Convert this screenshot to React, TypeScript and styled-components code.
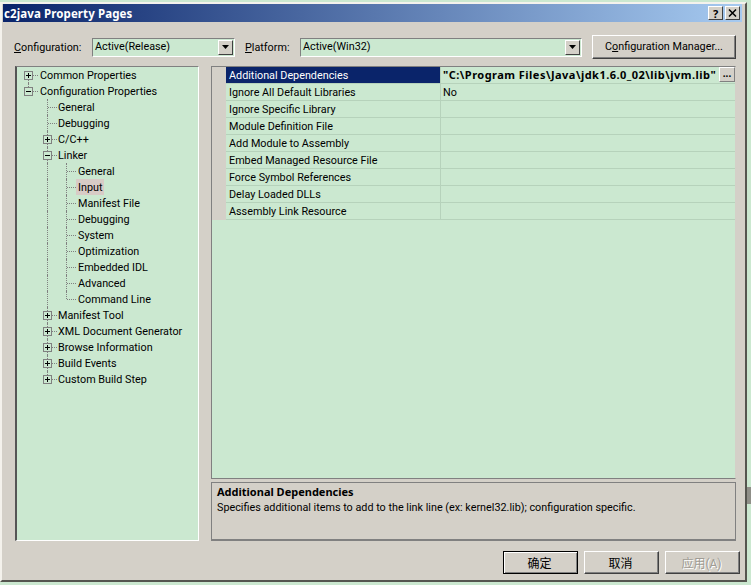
import React from 'react';
import styled, { createGlobalStyle } from 'styled-components';

const green = '#cbe8d0';
const face = '#d4d0c8';
const uiFont = 'Roboto, "Noto Sans CJK SC", sans-serif';
const boldFont = '"Noto Sans", "Noto Sans CJK SC", sans-serif';

const GlobalStyle = createGlobalStyle`
    html, body {
        margin: 0;
        padding: 0;
        background: ${green};
        overflow: hidden;
    }
    body {
        font-family: ${uiFont};
        font-size: 10.8px;
        color: #000;
    }
`;

const Page = styled.div`
    width: 751px;
    height: 585px;
    padding-top: 2px;
    box-sizing: border-box;
    display: flex;
    align-items: flex-start;
`;

const Side = styled.div`
    flex: 1;
    height: 100%;
    box-sizing: border-box;
    display: flex;
    flex-direction: column;
    padding-top: 485px;
`;

const SideThumb = styled.div`
    height: 17px;
    background: #8f8f88;
`;

const Window = styled.div`
    width: 747px;
    height: 580px;
    box-sizing: border-box;
    background: ${face};
    border-top: 2px solid #f4f2ec;
    border-left: 2px solid #f4f2ec;
    border-right: 2px solid #55554f;
    border-bottom: 2px solid #55554f;
    display: flex;
    flex-direction: column;
`;

const TitleBar = styled.div`
    height: 18px;
    margin: 0 3px 0 1px;
    padding: 0 2px 0 1px;
    display: flex;
    align-items: center;
    gap: 2px;
    background: linear-gradient(90deg, #0a246a 0%, #a6caf0 100%);
`;

const TitleText = styled.span`
    flex: 1;
    color: #fff;
    font: 700 11.5px ${boldFont};
    letter-spacing: 0.1px;
`;

const CaptionButton = styled.button`
    width: 15px;
    height: 14px;
    padding: 0;
    background: ${face};
    border: 1px solid;
    border-color: #fff #404040 #404040 #fff;
    display: flex;
    align-items: center;
    justify-content: center;
    font: 700 11px ${boldFont};
    color: #000;
`;

const Toolbar = styled.div`
    height: 24px;
    margin-top: 13px;
    padding: 0 9px 0 12px;
    display: flex;
    align-items: center;
`;

const FieldLabel = styled.label<{ $width: number; $inset?: number }>`
    width: ${({ $width }) => $width}px;
    padding-left: ${({ $inset }) => $inset ?? 0}px;
    box-sizing: border-box;
    flex-shrink: 0;
`;

const Combo = styled.div<{ $width: number }>`
    width: ${({ $width }) => $width}px;
    height: 19px;
    box-sizing: border-box;
    background: ${green};
    border: 1px solid;
    border-color: #808080 #fff #fff #808080;
    display: flex;
    align-items: center;
    justify-content: space-between;
    padding: 0 1px 0 2px;
    flex-shrink: 0;
`;

const ComboValue = styled.span`
    margin-top: -2px;
`;

const ComboArrow = styled.div`
    width: 15px;
    height: 15px;
    box-sizing: border-box;
    background: ${face};
    border: 1px solid;
    border-color: #fff #404040 #404040 #fff;
    display: flex;
    align-items: center;
    justify-content: center;
`;

const ManagerButton = styled.button`
    width: 144px;
    height: 24px;
    margin-left: 10px;
    padding: 0 0 2px;
    background: ${face};
    border: 1px solid;
    border-color: #fff #404040 #404040 #fff;
    box-shadow: inset -1px -1px 0 #808080;
    font: 10.8px ${uiFont};
    color: #000;
`;

const Panels = styled.div`
    height: 475px;
    margin-top: 7px;
    padding: 0 9px 0 13px;
    display: grid;
    grid-template-columns: 184px 525px;
    column-gap: 12px;
`;

const Tree = styled.div`
    box-sizing: border-box;
    background: ${green};
    border: 1px solid;
    border-width: 1px 1px 1px 2px;
    border-color: #808080 #fff #fff #555;
    padding: 0 0 0 2px;
`;

const TreeRow = styled.div`
    height: 16px;
    display: flex;
    align-items: stretch;
`;

const Guide = styled.div<{ $up?: boolean; $down?: boolean; $branch?: boolean }>`
    width: 19px;
    flex-shrink: 0;
    position: relative;
    display: flex;
    align-items: center;
    justify-content: center;
    &::before {
        content: '';
        position: absolute;
        left: 9px;
        top: ${({ $up }) => ($up ? 0 : 8)}px;
        bottom: ${({ $down }) => ($down ? 0 : 8)}px;
        border-left: 1px dotted #808080;
    }
    &::after {
        content: '';
        display: ${({ $branch }) => ($branch ? 'block' : 'none')};
        position: absolute;
        left: 10px;
        right: 0;
        top: 8px;
        border-top: 1px dotted #808080;
    }
`;

const Expander = styled.svg`
    position: relative;
    z-index: 1;
    width: 9px;
    height: 9px;
    margin-top: 1px;
`;

const TreeLabel = styled.span<{ $active?: boolean; $pull?: boolean }>`
    padding: 1px 2px 0;
    margin-left: ${({ $pull }) => ($pull ? -1 : 0)}px;
    line-height: 16px;
    height: 15px;
    overflow: hidden;
    white-space: nowrap;
    background: ${({ $active }) => ($active ? '#d8cbc6' : 'transparent')};
`;

const RightColumn = styled.div`
    display: flex;
    flex-direction: column;
    gap: 3px;
`;

const GridPanel = styled.div`
    flex: 1;
    box-sizing: border-box;
    background: ${green};
    border: 1px solid;
    border-color: #808080 ${face} #808080 #808080;
`;

const GridRow = styled.div`
    height: 17px;
    display: grid;
    grid-template-columns: 14px 214px 1fr;
`;

const GridMargin = styled.div`
    background: ${face};
`;

const NameCell = styled.div<{ $selected?: boolean }>`
    padding: 1px 0 0 3px;
    line-height: 15px;
    white-space: nowrap;
    box-sizing: border-box;
    border-bottom: 1px solid #b6d2bb;
    color: ${({ $selected }) => ($selected ? '#fff' : '#000')};
    background: ${({ $selected }) => ($selected ? '#0a246a' : 'transparent')};
`;

const ValueCell = styled.div`
    padding-left: 2px;
    margin-left: 1px;
    line-height: 18px;
    height: 17px;
    white-space: nowrap;
    box-sizing: border-box;
    border-bottom: 1px solid #b6d2bb;
    box-shadow: -1px 0 0 #b6d2bb;
    display: flex;
    justify-content: space-between;
`;

const PathValue = styled.span`
    font: 700 11px/16px ${boldFont};
    letter-spacing: 0.47px;
`;

const EllipsisButton = styled.button`
    width: 16px;
    height: 15px;
    padding: 0 0 5px;
    background: ${face};
    border: 1px solid;
    border-color: #fff #808080 #808080 #fff;
    font: 700 10px/10px ${boldFont};
    color: #000;
`;

const HelpPanel = styled.div`
    height: 59px;
    box-sizing: border-box;
    border: 1px solid;
    border-width: 1px 1px 2px 1px;
    border-color: #808080;
    padding: 1px 5px;
`;

const HelpTitle = styled.div`
    font: 700 11px/16px ${boldFont};
`;

const HelpText = styled.div`
    line-height: 16px;
`;

const Footer = styled.div`
    height: 23px;
    margin-top: 10px;
    padding-right: 5px;
    display: flex;
    justify-content: flex-end;
    gap: 6px;
`;

const DialogButton = styled.button<{ $isDefault?: boolean }>`
    width: 75px;
    height: 23px;
    padding: 0 2px 0 0;
    background: ${face};
    border: 1px solid;
    border-color: ${({ $isDefault }) => ($isDefault ? '#000' : '#fff #404040 #404040 #fff')};
    box-shadow: ${({ $isDefault }) => ($isDefault ? 'inset 1px 1px 0 #fff, inset -1px -1px 0 #808080' : 'inset -1px -1px 0 #808080')};
    font: 12px ${uiFont};
    color: #000;
    &:disabled {
        color: #a09c94;
        text-shadow: 1px 1px 0 #fff;
    }
`;

type GuideKind = 'none' | 'through' | 'branch' | 'last' | 'expandPlus' | 'expandMinus' | 'rootPlus' | 'rootMinus';

interface TreeItem {
    label: string;
    guides: GuideKind[];
    active?: boolean;
}

const level3 = (label: string, last = false, active = false): TreeItem => ({
    label,
    active,
    guides: ['none', 'through', last ? 'last' : 'branch'],
});

const treeItems: TreeItem[] = [
    { label: 'Common Properties', guides: ['rootPlus'] },
    { label: 'Configuration Properties', guides: ['rootMinus'] },
    { label: 'General', guides: ['none', 'branch'] },
    { label: 'Debugging', guides: ['none', 'branch'] },
    { label: 'C/C++', guides: ['none', 'expandPlus'] },
    { label: 'Linker', guides: ['none', 'expandMinus'] },
    level3('General'),
    level3('Input', false, true),
    level3('Manifest File'),
    level3('Debugging'),
    level3('System'),
    level3('Optimization'),
    level3('Embedded IDL'),
    level3('Advanced'),
    level3('Command Line', true),
    { label: 'Manifest Tool', guides: ['none', 'expandPlus'] },
    { label: 'XML Document Generator', guides: ['none', 'expandPlus'] },
    { label: 'Browse Information', guides: ['none', 'expandPlus'] },
    { label: 'Build Events', guides: ['none', 'expandPlus'] },
    { label: 'Custom Build Step', guides: ['none', 'expandPlus'] },
];

const gridNames = [
    'Additional Dependencies',
    'Ignore All Default Libraries',
    'Ignore Specific Library',
    'Module Definition File',
    'Add Module to Assembly',
    'Embed Managed Resource File',
    'Force Symbol References',
    'Delay Loaded DLLs',
    'Assembly Link Resource',
];

const ExpanderIcon = ({ open }: { open: boolean }) => (
    <Expander viewBox="0 0 9 9">
        <rect x="0.5" y="0.5" width="8" height="8" fill={green} stroke="#808080" />
        <path d={open ? 'M2 4.5h5' : 'M2 4.5h5M4.5 2v5'} stroke="#000" fill="none" />
    </Expander>
);

const ArrowIcon = () => (
    <svg width="7" height="4" viewBox="0 0 7 4">
        <path d="M0 0h7L3.5 4z" fill="#000" />
    </svg>
);

const CloseIcon = () => (
    <svg width="9" height="8" viewBox="0 0 9 8">
        <path d="M1 0.5l7 7M8 0.5l-7 7" stroke="#000" strokeWidth="1.5" fill="none" />
    </svg>
);

const renderGuide = (kind: GuideKind, index: number, isLastRow: boolean) => {
    switch (kind) {
        case 'rootPlus':
            return <Guide key={index} $down $branch><ExpanderIcon open={false} /></Guide>;
        case 'rootMinus':
            return <Guide key={index} $up $branch><ExpanderIcon open /></Guide>;
        case 'expandPlus':
            return <Guide key={index} $up $down={!isLastRow} $branch><ExpanderIcon open={false} /></Guide>;
        case 'expandMinus':
            return <Guide key={index} $up $down $branch><ExpanderIcon open /></Guide>;
        case 'through':
            return <Guide key={index} $up $down />;
        case 'branch':
            return <Guide key={index} $up $down $branch />;
        case 'last':
            return <Guide key={index} $up $branch />;
        default:
            return <Guide key={index} />;
    }
};

export default function App() {
    return (
        <Page>
            <GlobalStyle />
            <Window>
                <TitleBar>
                    <TitleText>c2java Property Pages</TitleText>
                    <CaptionButton>?</CaptionButton>
                    <CaptionButton><CloseIcon /></CaptionButton>
                </TitleBar>

                <Toolbar>
                    <FieldLabel $width={78}><u>C</u>onfiguration:</FieldLabel>
                    <Combo $width={143}>
                        <ComboValue>Active(Release)</ComboValue>
                        <ComboArrow><ArrowIcon /></ComboArrow>
                    </Combo>
                    <FieldLabel $width={65} $inset={10}><u>P</u>latform:</FieldLabel>
                    <Combo $width={282}>
                        <ComboValue>Active(Win32)</ComboValue>
                        <ComboArrow><ArrowIcon /></ComboArrow>
                    </Combo>
                    <ManagerButton>C<u>o</u>nfiguration Manager...</ManagerButton>
                </Toolbar>

                <Panels>
                    <Tree>
                        {treeItems.map((item, i) => (
                            <TreeRow key={i}>
                                {item.guides.map((kind, g) => renderGuide(kind, g, i === treeItems.length - 1))}
                                <TreeLabel $active={item.active} $pull={item.guides.length === 2}>{item.label}</TreeLabel>
                            </TreeRow>
                        ))}
                    </Tree>

                    <RightColumn>
                        <GridPanel>
                            {gridNames.map((name, i) => (
                                <GridRow key={name}>
                                    <GridMargin />
                                    <NameCell $selected={i === 0}>{name}</NameCell>
                                    <ValueCell>
                                        {i === 0 && (
                                            <>
                                                <PathValue>"C:\Program Files\Java\jdk1.6.0_02\lib\jvm.lib"</PathValue>
                                                <EllipsisButton>...</EllipsisButton>
                                            </>
                                        )}
                                        {i === 1 && 'No'}
                                    </ValueCell>
                                </GridRow>
                            ))}
                        </GridPanel>
                        <HelpPanel>
                            <HelpTitle>Additional Dependencies</HelpTitle>
                            <HelpText>Specifies additional items to add to the link line (ex: kernel32.lib); configuration specific.</HelpText>
                        </HelpPanel>
                    </RightColumn>
                </Panels>

                <Footer>
                    <DialogButton $isDefault>确定</DialogButton>
                    <DialogButton>取消</DialogButton>
                    <DialogButton disabled>应用(A)</DialogButton>
                </Footer>
            </Window>
            <Side>
                <SideThumb />
            </Side>
        </Page>
    );
}
